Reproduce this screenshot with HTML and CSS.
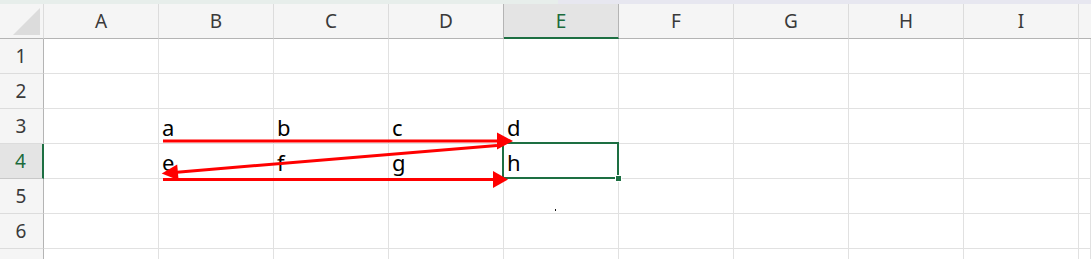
FILE: index.html
```html
<!DOCTYPE html>
<html lang="en">
<head>
<meta charset="utf-8">
<title>Sheet</title>
<link rel="stylesheet" href="styles.css">
</head>
<body>
<div class="app">
  <div class="topbar"></div>
  <div class="sheet">
    <div class="corner"><span class="tri"></span></div>
    <div class="ch">A</div><div class="ch">B</div><div class="ch">C</div><div class="ch pre">D</div><div class="ch sel">E</div><div class="ch">F</div><div class="ch">G</div><div class="ch">H</div><div class="ch">I</div><div class="ch last"></div>

    <div class="rh">1</div><div class="c"></div><div class="c"></div><div class="c"></div><div class="c"></div><div class="c"></div><div class="c"></div><div class="c"></div><div class="c"></div><div class="c"></div><div class="c"></div>
    <div class="rh">2</div><div class="c"></div><div class="c"></div><div class="c"></div><div class="c"></div><div class="c"></div><div class="c"></div><div class="c"></div><div class="c"></div><div class="c"></div><div class="c"></div>
    <div class="rh">3</div><div class="c"></div><div class="c">a</div><div class="c">b</div><div class="c">c</div><div class="c">d</div><div class="c"></div><div class="c"></div><div class="c"></div><div class="c"></div><div class="c"></div>
    <div class="rh sel">4</div><div class="c"></div><div class="c">e</div><div class="c">f</div><div class="c">g</div><div class="c active">h<span class="selbox"><span class="handle"></span></span></div><div class="c"></div><div class="c"></div><div class="c"></div><div class="c"></div><div class="c"></div>
    <div class="rh">5</div><div class="c"></div><div class="c"></div><div class="c"></div><div class="c"></div><div class="c"></div><div class="c"></div><div class="c"></div><div class="c"></div><div class="c"></div><div class="c"></div>
    <div class="rh">6</div><div class="c"></div><div class="c"></div><div class="c"></div><div class="c"></div><div class="c"></div><div class="c"></div><div class="c"></div><div class="c"></div><div class="c"></div><div class="c"></div>
    <div class="rh"></div><div class="c"></div><div class="c"></div><div class="c"></div><div class="c"></div><div class="c"></div><div class="c"></div><div class="c"></div><div class="c"></div><div class="c"></div><div class="c"></div>
  </div>

  <svg class="overlay" width="1091" height="259" viewBox="0 0 1091 259" xmlns="http://www.w3.org/2000/svg">
    <g fill="#ff0000" stroke="#ff0000">
      <line x1="163" y1="141" x2="499" y2="141" stroke-width="3"/>
      <polygon points="497,132.5 513,141 497,149.5" stroke="none"/>
      <line x1="497" y1="145.5" x2="177" y2="172.2" stroke-width="3"/>
      <polygon points="161.7,173.4 177.2,164.4 178.6,180.2" stroke="none"/>
      <line x1="163" y1="179.5" x2="495" y2="179.5" stroke-width="3"/>
      <polygon points="493,171 508,179.5 493,188" stroke="none"/>
    </g>
    <rect x="555" y="209" width="1" height="2" fill="#111"/>
  </svg>
</div>
</body>
</html>
```

FILE: styles.css
```css
* { box-sizing: border-box; }
html, body { margin: 0; padding: 0; }
body {
  background: #ffffff;
  font-family: "Noto Sans", "Open Sans", sans-serif;
  overflow: hidden;
}
.app {
  position: relative;
  width: 1091px;
  height: 259px;
  overflow: hidden;
}
.topbar {
  height: 4px;
  background: linear-gradient(to right, #e7eeeb 0, #e7eeeb 558px, #e7e7f0 558px, #e7e7f0 100%);
}
.sheet {
  display: grid;
  grid-template-columns: 44px repeat(9, 115px) 1fr;
  grid-auto-rows: 35px;
}
.corner {
  position: relative;
  background: #f5f5f5;
  border-right: 1px solid #dcdcdc;
  border-bottom: 1px solid #b4b4b4;
}
.tri {
  position: absolute;
  left: 13px;
  top: 4px;
  width: 27px;
  height: 27px;
  background: #dcdcdc;
  clip-path: polygon(100% 0, 100% 100%, 0 100%);
}
.ch {
  background: #f5f5f5;
  border-right: 1px solid #dcdcdc;
  border-bottom: 1px solid #b4b4b4;
  display: flex;
  align-items: center;
  justify-content: center;
  font-size: 19px;
  color: #3a3a3a;
}
.ch.pre { border-right-color: #b4b4b4; }
.ch.sel {
  background: #e4e4e4;
  color: #1b6b3c;
  border-right-color: #b4b4b4;
  border-bottom: 2px solid #1d6f42;
}
.ch.last { border-right: none; }
.rh {
  background: #f5f5f5;
  border-right: 1px solid #b4b4b4;
  border-bottom: 1px solid #dcdcdc;
  display: flex;
  align-items: center;
  justify-content: center;
  padding-right: 1px;
  font-size: 19px;
  color: #3a3a3a;
}
.rh.sel {
  background: #e4e4e4;
  color: #1b6b3c;
  border-right: 2px solid #1d6f42;
  border-bottom-color: #c8c8c8;
}
.c {
  position: relative;
  border-right: 1px solid #e1e1e1;
  border-bottom: 1px solid #e1e1e1;
  display: flex;
  align-items: flex-end;
  padding-left: 3px;
  padding-bottom: 1px;
  font-size: 22px;
  color: #000;
  white-space: nowrap;
}
.c.active { z-index: 2; }
.selbox {
  position: absolute;
  top: -2px;
  left: -2px;
  right: -1px;
  bottom: -1px;
  border: 2px solid #1d6f42;
}
.handle {
  position: absolute;
  right: -5px;
  bottom: -5px;
  width: 7px;
  height: 7px;
  background: #1d6f42;
  border: 1px solid #ffffff;
}
.overlay {
  position: absolute;
  top: 0;
  left: 0;
  z-index: 3;
  pointer-events: none;
}
```
